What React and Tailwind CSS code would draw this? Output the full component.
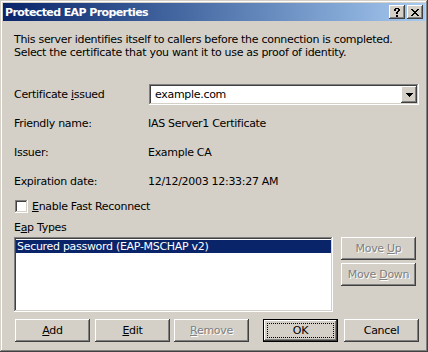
import React from 'react'

const RAISED = 'shadow-[inset_-1px_-1px_#404040,inset_1px_1px_#ffffff,inset_-2px_-2px_#808080,inset_2px_2px_#d4d0c8]'

function HelpGlyph() {
  return (
    <svg width="6" height="9" viewBox="0 0 6 9" shapeRendering="crispEdges">
      <path fill="#000" d="M1 0h4v1H1zM0 1h2v2H0zM4 1h2v2H4zM3 3h2v1H3zM2 4h2v2H2zM2 7h2v2H2z" />
    </svg>
  )
}

function CloseGlyph() {
  return (
    <svg width="8" height="7" viewBox="0 0 8 7" shapeRendering="crispEdges">
      <path fill="#000" d="M0 0h2v1H0zM6 0h2v1H6zM1 1h2v1H1zM5 1h2v1H5zM2 2h4v1H2zM3 3h2v1H3zM2 4h4v1H2zM1 5h2v1H1zM5 5h2v1H5zM0 6h2v1H0zM6 6h2v1H6z" />
    </svg>
  )
}

function CaptionButton({ children }) {
  return (
    <div className={`w-[16px] h-[14px] bg-[#d4d0c8] flex items-center justify-center ${RAISED}`}>
      {children}
    </div>
  )
}

function Button({ children, disabled, isDefault }) {
  if (isDefault) {
    return (
      <div className="w-[75px] h-[23px] border border-black">
        <div className={`w-full h-full bg-[#d4d0c8] p-[3px] ${RAISED}`}>
          <div className="w-full h-full border border-dotted border-black flex items-center justify-center">
            <span>{children}</span>
          </div>
        </div>
      </div>
    )
  }
  return (
    <div
      className={`w-[75px] h-[23px] bg-[#d4d0c8] flex items-center justify-center ${RAISED} ${
        disabled ? 'text-[#808080] [text-shadow:1px_1px_0_#ffffff]' : ''
      }`}
    >
      <span>{children}</span>
    </div>
  )
}

function InfoRow({ label, value, className }) {
  return (
    <div className={`flex ${className}`}>
      <span className="w-[134px]">{label}</span>
      <span>{value}</span>
    </div>
  )
}

export default function App() {
  return (
    <div className="w-[428px] h-[352px] bg-[#d4d0c8] p-[3px] flex flex-col text-black text-[11px] leading-[13px] tracking-[-0.3px] font-['DejaVu_Sans',sans-serif] shadow-[inset_-1px_-1px_#404040,inset_1px_1px_#d4d0c8,inset_-2px_-2px_#808080,inset_2px_2px_#ffffff]">
      {/* Title bar */}
      <div className="h-[18px] flex items-center justify-between pl-[2px] pr-[2px] bg-gradient-to-r from-[#0a246a] to-[#a6caf0]">
        <span className="text-white font-bold text-[11px] tracking-[-0.6px]">Protected EAP Properties</span>
        <div className="flex gap-[2px]">
          <CaptionButton><HelpGlyph /></CaptionButton>
          <CaptionButton><CloseGlyph /></CaptionButton>
        </div>
      </div>

      {/* Body */}
      <div className="flex flex-col pl-[11px] pt-[12px]">
        <p>This server identifies itself to callers before the connection is completed.</p>
        <p>Select the certificate that you want it to use as proof of identity.</p>

        <div className="mt-[25px] flex items-center h-[21px]">
          <span className="w-[135px]">Certificate <span className="underline">i</span>ssued</span>
          <div className="w-[270px] h-[21px] bg-white p-[2px] flex items-center shadow-[inset_-1px_-1px_#ffffff,inset_1px_1px_#808080,inset_-2px_-2px_#d4d0c8,inset_2px_2px_#404040]">
            <span className="flex-1 pl-[4px]">example.com</span>
            <div className={`w-[16px] h-[17px] bg-[#d4d0c8] flex items-center justify-center ${RAISED}`}>
              <svg width="7" height="4" viewBox="0 0 7 4" shapeRendering="crispEdges">
                <path fill="#000" d="M0 0h7v1H0zM1 1h5v1H1zM2 2h3v1H2zM3 3h1v1H3z" />
              </svg>
            </div>
          </div>
        </div>

        <InfoRow className="mt-[12px]" label="Friendly name:" value="IAS Server1 Certificate" />
        <InfoRow className="mt-[16px]" label="Issuer:" value="Example CA" />
        <InfoRow className="mt-[16px]" label="Expiration date:" value="12/12/2003 12:33:27 AM" />

        <div className="mt-[12px] flex items-center h-[13px] pl-[1px]">
          <div className="w-[13px] h-[13px] bg-white shadow-[inset_-1px_-1px_#ffffff,inset_1px_1px_#808080,inset_-2px_-2px_#d4d0c8,inset_2px_2px_#404040]" />
          <span className="ml-[4px]"><span className="underline">E</span>nable Fast Reconnect</span>
        </div>

        <p className="mt-[8px]">E<span className="underline">a</span>p Types</p>

        <div className="mt-[3px] flex">
          <div className="w-[319px] h-[75px] bg-white p-[2px] shadow-[inset_-1px_-1px_#ffffff,inset_1px_1px_#808080,inset_-2px_-2px_#d4d0c8,inset_2px_2px_#404040]">
            <div className="h-[13px] bg-[#0a246a] text-white pl-[1px] mt-[1px]">
              Secured password (EAP-MSCHAP v2)
            </div>
          </div>
          <div className="ml-[8px] flex flex-col gap-[3px]">
            <Button disabled>Move <span className="underline">U</span>p</Button>
            <Button disabled>Move <span className="underline">D</span>own</Button>
          </div>
        </div>

        <div className="mt-[7px] flex pl-[1px]">
          <Button><span className="underline">A</span>dd</Button>
          <div className="ml-[5px]">
            <Button><span className="underline">E</span>dit</Button>
          </div>
          <div className="ml-[4px]">
            <Button disabled><span className="underline">R</span>emove</Button>
          </div>
          <div className="ml-[14px]">
            <Button isDefault>OK</Button>
          </div>
          <div className="ml-[6px]">
            <Button>Cancel</Button>
          </div>
        </div>
      </div>
    </div>
  )
}
